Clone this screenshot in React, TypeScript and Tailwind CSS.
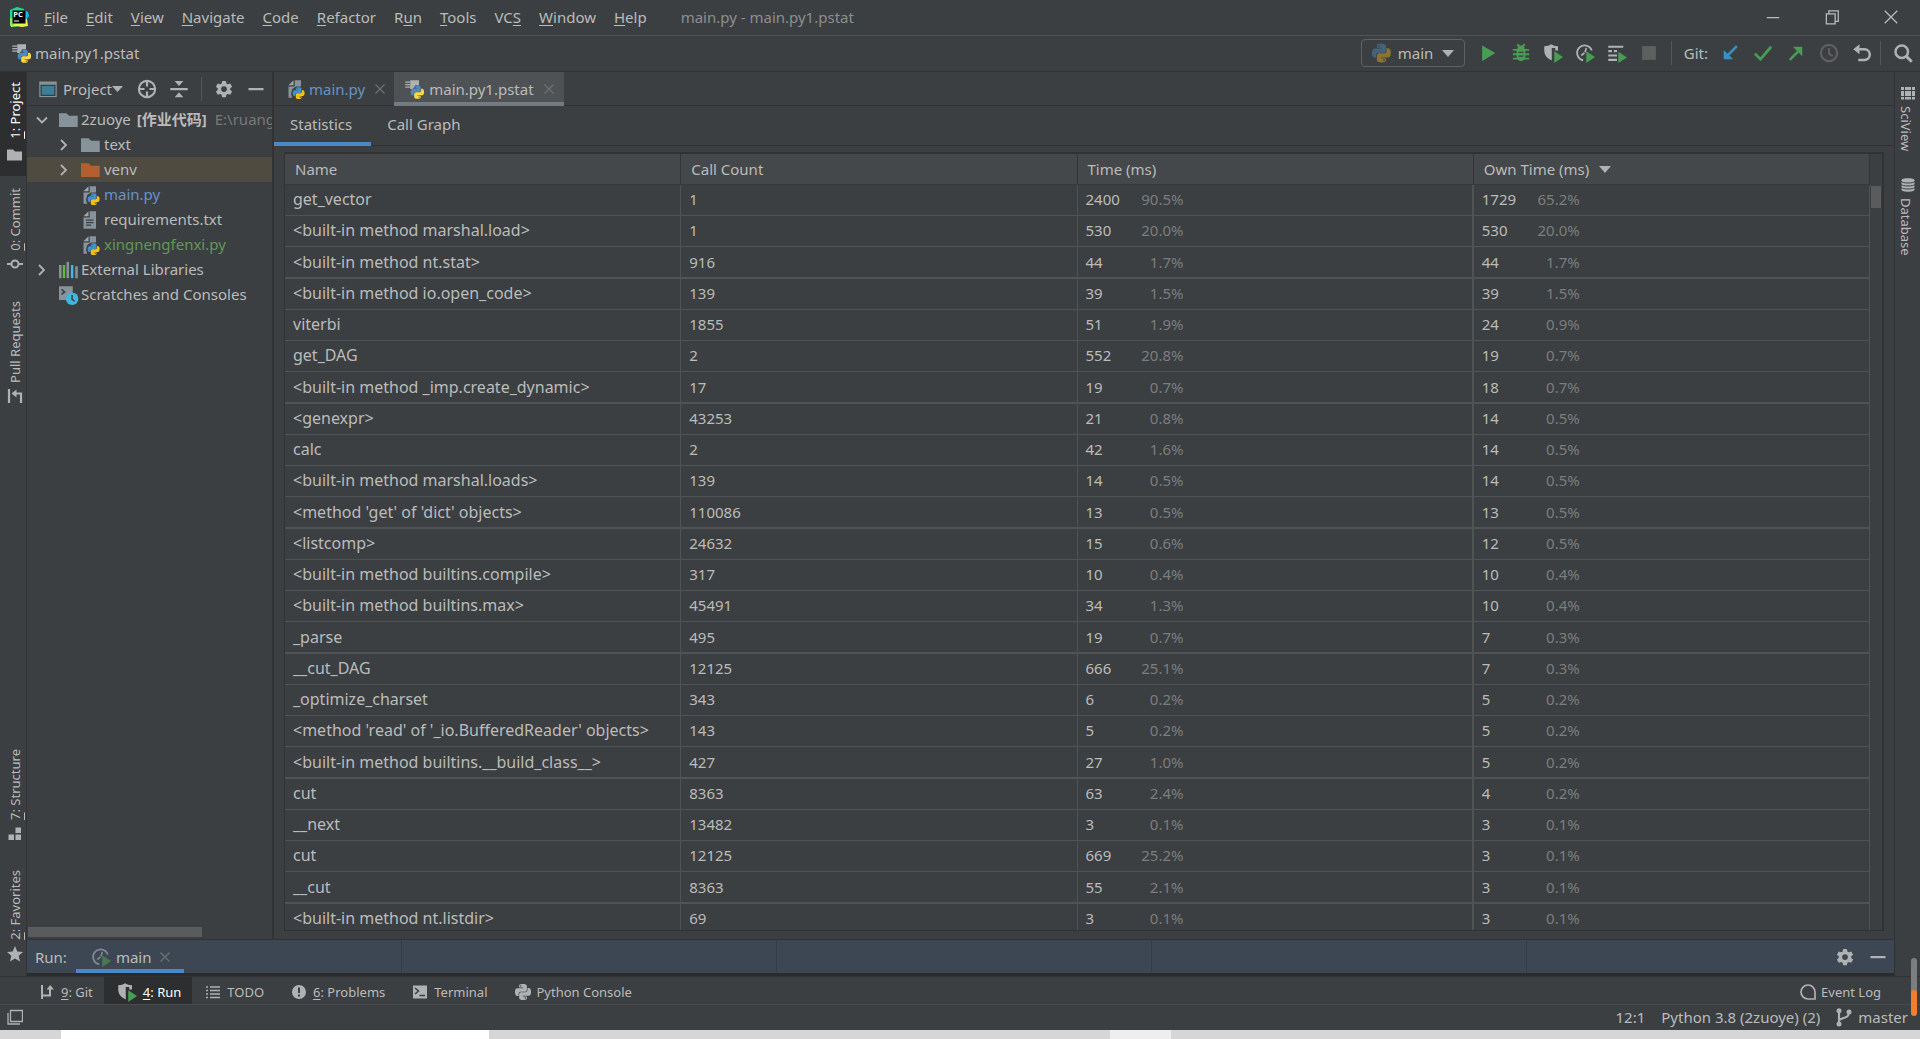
import type { ReactNode } from "react";

const treeFiles = [
  { name: "text", kind: "folder", color: "text-[#bbbbbb]" },
  { name: "venv", kind: "excluded", color: "text-[#bbbbbb]" },
  { name: "main.py", kind: "python", color: "text-[#6494c4]" },
  { name: "requirements.txt", kind: "text", color: "text-[#bbbbbb]" },
  { name: "xingnengfenxi.py", kind: "python", color: "text-[#629755]" },
];

const stats = [
  ["get_vector", "1", "2400", "90.5%", "1729", "65.2%"],
  ["<built-in method marshal.load>", "1", "530", "20.0%", "530", "20.0%"],
  ["<built-in method nt.stat>", "916", "44", "1.7%", "44", "1.7%"],
  ["<built-in method io.open_code>", "139", "39", "1.5%", "39", "1.5%"],
  ["viterbi", "1855", "51", "1.9%", "24", "0.9%"],
  ["get_DAG", "2", "552", "20.8%", "19", "0.7%"],
  ["<built-in method _imp.create_dynamic>", "17", "19", "0.7%", "18", "0.7%"],
  ["<genexpr>", "43253", "21", "0.8%", "14", "0.5%"],
  ["calc", "2", "42", "1.6%", "14", "0.5%"],
  ["<built-in method marshal.loads>", "139", "14", "0.5%", "14", "0.5%"],
  ["<method 'get' of 'dict' objects>", "110086", "13", "0.5%", "13", "0.5%"],
  ["<listcomp>", "24632", "15", "0.6%", "12", "0.5%"],
  ["<built-in method builtins.compile>", "317", "10", "0.4%", "10", "0.4%"],
  ["<built-in method builtins.max>", "45491", "34", "1.3%", "10", "0.4%"],
  ["_parse", "495", "19", "0.7%", "7", "0.3%"],
  ["__cut_DAG", "12125", "666", "25.1%", "7", "0.3%"],
  ["_optimize_charset", "343", "6", "0.2%", "5", "0.2%"],
  ["<method 'read' of '_io.BufferedReader' objects>", "143", "5", "0.2%", "5", "0.2%"],
  ["<built-in method builtins.__build_class__>", "427", "27", "1.0%", "5", "0.2%"],
  ["cut", "8363", "63", "2.4%", "4", "0.2%"],
  ["__next", "13482", "3", "0.1%", "3", "0.1%"],
  ["cut", "12125", "669", "25.2%", "3", "0.1%"],
  ["__cut", "8363", "55", "2.1%", "3", "0.1%"],
  ["<built-in method nt.listdir>", "69", "3", "0.1%", "3", "0.1%"],
];

// [before mnemonic, mnemonic, after mnemonic]
const menus = [
  ["", "F", "ile"],
  ["", "E", "dit"],
  ["", "V", "iew"],
  ["", "N", "avigate"],
  ["", "C", "ode"],
  ["", "R", "efactor"],
  ["R", "u", "n"],
  ["", "T", "ools"],
  ["VC", "S", ""],
  ["", "W", "indow"],
  ["", "H", "elp"],
];

const PY_TOP =
  "M14.25.18l.9.2.73.26.59.3.45.32.34.34.25.34.16.33.1.3.04.26.02.2-.01.13V8.5l-.05.63-.13.55-.21.46-.26.38-.3.31-.33.25-.35.19-.35.14-.33.1-.3.07-.26.04-.21.02H8.77l-.69.05-.59.14-.5.22-.41.27-.33.32-.27.35-.2.36-.15.37-.1.35-.07.32-.04.27-.02.21v3.06H3.17l-.21-.03-.28-.07-.32-.12-.35-.18-.36-.26-.36-.36-.35-.46-.32-.59-.28-.73-.21-.88-.14-1.05-.05-1.23.06-1.22.16-1.04.24-.87.32-.71.36-.57.4-.44.42-.33.42-.24.4-.16.36-.1.32-.05.24-.01h.16l.06.01h8.16v-.83H6.18l-.01-2.75-.02-.37.05-.34.11-.31.17-.28.25-.26.31-.23.38-.2.44-.18.51-.15.58-.12.64-.1.71-.06.77-.04.84-.02 1.27.05zm-6.3 1.98l-.23.33-.08.41.08.41.23.34.33.22.41.09.41-.09.33-.22.23-.34.08-.41-.08-.41-.23-.33-.33-.22-.41-.09-.41.09z";
const PY_BOTTOM =
  "M21.1 6.11l.28.06.32.12.35.18.36.27.36.35.35.47.32.59.28.73.21.88.14 1.04.05 1.23-.06 1.23-.16 1.04-.24.86-.32.71-.36.57-.4.45-.42.33-.42.24-.4.16-.36.09-.32.05-.24.02-.16-.01h-8.22v.82h5.84l.01 2.76.02.36-.05.34-.11.31-.17.29-.25.25-.31.24-.38.2-.44.17-.51.15-.58.13-.64.09-.71.07-.77.04-.84.01-1.27-.04-1.07-.14-.9-.2-.73-.25-.59-.3-.45-.33-.34-.34-.25-.34-.16-.33-.1-.3-.04-.25-.02-.2.01-.13v-5.34l.05-.64.13-.54.21-.46.26-.38.3-.32.33-.24.35-.2.35-.14.33-.1.3-.06.26-.04.21-.02.13-.01h5.84l.69-.05.59-.14.5-.21.41-.28.33-.32.27-.35.2-.36.15-.36.1-.35.07-.32.04-.28.02-.21V6.07h2.09l.14.01zm-6.47 14.25l-.23.33-.08.41.08.41.23.33.33.23.41.08.41-.08.33-.23.23-.33.08-.41-.08-.41-.23-.33-.33-.23-.41-.08-.41.08z";

function Icon({ children, className = "size-5" }: { children: ReactNode; className?: string }) {
  return (
    <svg viewBox="0 0 16 16" fill="none" aria-hidden="true" className={`shrink-0 ${className}`}>
      {children}
    </svg>
  );
}

function PySnake({ x, y, size, top, bottom }: { x: number; y: number; size: number; top: string; bottom: string }) {
  return (
    <g transform={`translate(${x} ${y}) scale(${size / 24})`}>
      <path d={PY_TOP} fill={top} />
      <path d={PY_BOTTOM} fill={bottom} />
    </g>
  );
}

function PyFileIcon() {
  return (
    <Icon>
      <path d="M6 1 2 5h4z" fill="#9aa7b0" />
      <path d="M7 1v5H2v9h3l-1-3 1-4 3-2h4V1z" fill="#87939a" />
      <PySnake x={5.4} y={6.6} size={9.4} top="#3f93cc" bottom="#f5c211" />
    </Icon>
  );
}

function PstatIcon() {
  return (
    <Icon>
      <path d="M5 1h7v4H9L7 8H5z" fill="#afb1b3" />
      <path d="M1 2h4v1H1zM1 4h4v1H1zM1 6h5v1H1z" fill="#afb1b3" />
      <PySnake x={5.4} y={5.2} size={10.6} top="#4b8bc2" bottom="#fbd84b" />
    </Icon>
  );
}

function TextFileIcon() {
  return (
    <Icon>
      <path d="M6 1 2 5h4z" fill="#9aa7b0" />
      <path d="M7 1v5H2v9h10V1z" fill="#87939a" />
      <path d="M4 8h6M4 10h6M4 12h4" stroke="#3c3f41" />
    </Icon>
  );
}

function FolderIcon({ fill, className }: { fill: string; className?: string }) {
  return (
    <Icon className={className}>
      <path d="M0 2.5h6l2 2h7v9H0z" fill={fill} />
    </Icon>
  );
}

function GearIcon() {
  return (
    <Icon>
      <path
        fillRule="evenodd"
        fill="#afb1b3"
        d="M6.5 1.5h3l.4 2 1.2.7 1.9-.7 1.5 2.6-1.500 1.300v1.300l1.500 1.300-1.500 2.600-1.900-.7-1.200.7-.4 2h-3l-.4-2-1.200-.7-1.900.7L1.500 10l1.500-1.300V7.400L1.500 6.100 3 3.500l1.900.7 1.200-.7zM8 5.700a2.300 2.300 0 1 0 0 4.600 2.300 2.300 0 0 0 0-4.600z"
      />
    </Icon>
  );
}

function MinusIcon() {
  return (
    <Icon>
      <path d="M2 7.2h12V9H2z" fill="#afb1b3" />
    </Icon>
  );
}

function CloseIcon() {
  return (
    <svg viewBox="0 0 10 10" aria-hidden="true" className="size-[10px] shrink-0">
      <path d="M.5.5l9 9M9.5.5l-9 9" stroke="#6e7173" strokeWidth="1.2" />
    </svg>
  );
}

function ProfileIcon({ dim = false }: { dim?: boolean }) {
  const gray = dim ? "#7f878f" : "#afb1b3";
  return (
    <Icon>
      <path d="M6.5 13.8A6 6 0 1 1 13.4 6" stroke={gray} strokeWidth="1.5" />
      <path d="M9 4 8 7.5M5 10l2.5-2" stroke={gray} strokeWidth="1.3" />
      <path d="M9 6.5l7 4.7L9 16z" fill={dim ? "#49784f" : "#499c54"} />
    </Icon>
  );
}

function CoverageIcon() {
  return (
    <Icon>
      <path d="M1 2.5Q4.5 2.5 6.500 1q2 1.500 5.500 1.500V6H9.800V4H7v10C3 12 1 9.500 1 6z" fill="#afb1b3" />
      <path d="M9 6.5l7 4.7L9 16z" fill="#499c54" />
    </Icon>
  );
}

function Chevron({ open = false }: { open?: boolean }) {
  return (
    <Icon className="size-4">
      <path
        d={open ? "M3 5.5l5 5 5-5" : "M5 3l5 5-5 5"}
        stroke="#afb1b3"
        strokeWidth="1.8"
      />
    </Icon>
  );
}

function PycharmLogo() {
  return (
    <svg viewBox="0 0 20 20" aria-hidden="true" className="size-5 shrink-0">
      <path d="M1 3 8 0l7 2 1 14-9 4-6-1z" fill="#21d789" />
      <path d="M15 3l4 2 1 4-3 4-3-5z" fill="#07c3f2" />
      <path d="M1 12l6-2 11 2 1 7-6 1-6-1-5 1z" fill="#e8f44c" />
      <path d="M1 11h4v8l-4-1z" fill="#8be85a" />
      <path d="M3.5 3.5h13v13h-13z" fill="#000" />
      <path d="M5 13.5h5v1H5z" fill="#fff" />
      <text x="4.3" y="10" fill="#fff" fontSize="7.5" fontWeight="700" fontFamily="Open Sans, sans-serif">
        PC
      </text>
    </svg>
  );
}

function Separator() {
  return <div className="h-6 w-px bg-[#515658]" />;
}

function TitleBar() {
  return (
    <header className="flex h-9 shrink-0 items-center border-b border-[#515455] pb-px pl-[9px]">
      <PycharmLogo />
      <nav className="ml-[15px] flex gap-[18px]">
        {menus.map(([before, key, after]) => (
          <button key={before + key + after} type="button" className="whitespace-nowrap">
            {before}
            <span className="underline underline-offset-2">{key}</span>
            {after}
          </button>
        ))}
      </nav>
      <h1 className="ml-[34px] text-[#8c8e8f]">main.py - main.py1.pstat</h1>
      <div className="ml-auto flex gap-[39px] pr-[19px]">
        <button type="button" aria-label="Minimize">
          <Icon>
            <path d="M3 8.5h10" stroke="#bbb" />
          </Icon>
        </button>
        <button type="button" aria-label="Restore">
          <Icon>
            <path d="M3.5 5.5h7v8h-7zM5.5 5V3H13v8.5h-2" stroke="#bbb" />
          </Icon>
        </button>
        <button type="button" aria-label="Close">
          <Icon>
            <path d="M3 3l10 10M13 3 3 13" stroke="#bbb" />
          </Icon>
        </button>
      </div>
    </header>
  );
}

function Toolbar() {
  return (
    <div className="flex h-9 shrink-0 items-center border-b border-[#323232] pr-[7px] pb-px pl-[11px]">
      <PstatIcon />
      <span className="ml-1">main.py1.pstat</span>
      <div className="ml-auto flex items-center gap-3">
        <div className="relative flex items-center">
          <span className="pointer-events-none absolute left-[11px]">
            <Icon>
              <PySnake x={0} y={0.5} size={15} top="#44647a" bottom="#8a7432" />
            </Icon>
          </span>
          <select
            aria-label="Run configuration"
            className="h-7 w-[104px] appearance-none rounded border border-[#5e6162] bg-transparent pl-9 leading-5"
          >
            <option>main</option>
          </select>
          <svg viewBox="0 0 12 7" aria-hidden="true" className="pointer-events-none absolute right-[11px] h-[7px] w-3">
            <path d="M0 0h12L6 7z" fill="#afb1b3" />
          </svg>
        </div>
        <button type="button" aria-label="Run" className="ml-[2px]">
          <Icon>
            <path d="M2.5 2 13 8 2.500 14.500z" fill="#499c54" />
          </Icon>
        </button>
        <button type="button" aria-label="Debug">
          <Icon>
            <path d="M4.5 5.5h7V11a3.500 3.500 0 0 1-7 0z" fill="#499c54" />
            <path d="M5 5a3 3 0 0 1 6 0z" fill="#499c54" />
            <path d="M5 1l2 2M11 1 9 3M1.5 5.5h13M1.5 9h13M1.5 12.5h13" stroke="#499c54" strokeWidth="1.5" />
            <path d="M6 7.5h4M6 10.5h4" stroke="#3c3f41" />
          </Icon>
        </button>
        <button type="button" aria-label="Run with coverage">
          <CoverageIcon />
        </button>
        <button type="button" aria-label="Profile">
          <ProfileIcon />
        </button>
        <button type="button" aria-label="Concurrency diagram">
          <Icon>
            <path d="M1 3h12M1 6.5h3M5.5 6.5H8M1 10h7M1 13.5h7" stroke="#afb1b3" strokeWidth="1.7" />
            <path d="M9 7l7 4.5L9 16z" fill="#499c54" />
          </Icon>
        </button>
        <button type="button" aria-label="Stop" disabled>
          <Icon>
            <path d="M2.5 2.5h11v11h-11z" fill="#5e6060" />
          </Icon>
        </button>
        <Separator />
        <span>Git:</span>
        <div className="flex gap-[13px]">
          <button type="button" aria-label="Update project">
            <Icon>
              <path d="M13.5 2.5 5 11" stroke="#3592c4" strokeWidth="2" />
              <path d="M3 5.5V13h7.5z" fill="#3592c4" />
            </Icon>
          </button>
          <button type="button" aria-label="Commit">
            <Icon>
              <path d="M1.5 8.5 6 13l8.500-10" stroke="#499c54" strokeWidth="2.2" />
            </Icon>
          </button>
          <button type="button" aria-label="Push">
            <Icon>
              <path d="M3 13.5 11.5 5" stroke="#499c54" strokeWidth="2" />
              <path d="M5.5 3H13v7.5z" fill="#499c54" />
            </Icon>
          </button>
          <button type="button" aria-label="Show history" disabled>
            <Icon>
              <circle cx="8" cy="8" r="6.5" stroke="#5e6060" strokeWidth="1.8" />
              <path d="M8 4v4.5l3 2" stroke="#5e6060" strokeWidth="1.6" />
            </Icon>
          </button>
          <button type="button" aria-label="Rollback">
            <Icon>
              <path d="M3 5h7a4 4 0 0 1 0 8.5H5" stroke="#afb1b3" strokeWidth="2" />
              <path d="M6 1v8L1 5z" fill="#afb1b3" />
            </Icon>
          </button>
        </div>
        <div className="-ml-1">
          <Separator />
        </div>
        <button type="button" aria-label="Search everywhere">
          <Icon>
            <circle cx="7" cy="7" r="5" stroke="#afb1b3" strokeWidth="2" />
            <path d="M10.5 10.5 15 15" stroke="#afb1b3" strokeWidth="2.4" />
          </Icon>
        </button>
      </div>
    </div>
  );
}

function SideLabel({ mnemonic, children }: { mnemonic?: string; children: ReactNode }) {
  return (
    <span className="rotate-180 whitespace-nowrap [writing-mode:vertical-rl]">
      {mnemonic && <span className="underline underline-offset-2">{mnemonic}</span>}
      {children}
    </span>
  );
}

function LeftStripe() {
  return (
    <aside className="flex w-[27px] shrink-0 flex-col border-r border-[#323232] text-[13px] leading-4">
      <button type="button" className="flex h-[104px] flex-col items-center justify-end gap-2 bg-[#2c2e2f] pb-[13px] pl-[3px] text-white">
        <SideLabel mnemonic="1">: Project</SideLabel>
        <FolderIcon fill="#afb1b3" className="size-4" />
      </button>
      <button type="button" className="flex h-24 flex-col items-center justify-end gap-[5px] pl-[3px]">
        <SideLabel mnemonic="0">: Commit</SideLabel>
        <Icon className="size-4">
          <circle cx="8" cy="8" r="3.5" stroke="#afb1b3" strokeWidth="2" />
          <path d="M0 8h4M12 8h4" stroke="#afb1b3" strokeWidth="2" />
        </Icon>
      </button>
      <button type="button" className="flex h-[132px] flex-col items-center justify-end gap-[5px] pl-[3px]">
        <SideLabel>Pull Requests</SideLabel>
        <Icon className="size-4">
          <path d="M2 1v14M6 5.5h8V15" stroke="#afb1b3" strokeWidth="2.2" />
          <path d="M9.5 1.5v8l-5-4z" fill="#afb1b3" />
        </Icon>
      </button>
      <div className="mt-auto flex flex-col pb-[14px]">
        <button type="button" className="flex flex-col items-center gap-[6px] pl-[3px]">
          <SideLabel mnemonic="7">: Structure</SideLabel>
          <Icon className="size-4">
            <path d="M8.5 1.5H14V7H8.5zM1.5 8.5H7V14H1.5zM8.5 8.5H14V14H8.5z" fill="#afb1b3" />
          </Icon>
        </button>
        <button type="button" className="mt-7 flex flex-col items-center gap-[6px] pl-[3px]">
          <SideLabel mnemonic="2">: Favorites</SideLabel>
          <Icon className="size-4">
            <path d="M8 0l2.3 5.4 5.7.5-4.3 3.8L13 15.5 8 12.4l-5 3.1 1.3-5.8L0 5.900l5.700-.5z" fill="#afb1b3" />
          </Icon>
        </button>
      </div>
    </aside>
  );
}

function RightStripe() {
  return (
    <aside className="flex w-[26px] shrink-0 flex-col items-center gap-[26px] border-l border-[#323232] pt-[13px] text-[13px] leading-4">
      <button type="button" className="flex flex-col items-center gap-[5px]">
        <Icon className="size-4">
          <path d="M1 2h14v3H1zM1 6h14v5H1zM1 12h14v2.5H1z" fill="#afb1b3" />
          <path d="M4.5 1v14M11.5 1v14" stroke="#3c3f41" />
        </Icon>
        <span className="pr-1 [writing-mode:vertical-rl]">SciView</span>
      </button>
      <button type="button" className="flex flex-col items-center gap-[5px]">
        <Icon className="size-4">
          <path d="M1.5 3C1.5.5 14.5.5 14.5 3v9.500c0 3-13 3-13 0z" fill="#afb1b3" />
          <path d="M1 4.5c2 2 12 2 14 0M1 7.5c2 2 12 2 14 0M1 10.5c2 2 12 2 14 0" stroke="#3c3f41" />
        </Icon>
        <span className="pr-1 [writing-mode:vertical-rl]">Database</span>
      </button>
    </aside>
  );
}

function FileIcon({ kind }: { kind: string }) {
  if (kind === "folder") return <FolderIcon fill="#87939a" />;
  if (kind === "excluded") return <FolderIcon fill="#b35f2f" />;
  if (kind === "python") return <PyFileIcon />;
  return <TextFileIcon />;
}

function ProjectPanel() {
  return (
    <section className="flex w-[247px] shrink-0 flex-col overflow-hidden border-r-2 border-[#323232]">
      <div className="flex h-[34px] shrink-0 items-center border-b border-[#323232] pl-[11px]">
        <button type="button" className="flex items-center">
          <Icon>
            <path d="M1 2h14v12.500H1z" fill="#87939a" />
            <path d="M2.5 5h11v8h-11z" fill="#3b7f98" stroke="#3c3f41" />
          </Icon>
          <span className="ml-[5px]">Project</span>
          <svg viewBox="0 0 11 6" aria-hidden="true" className="h-[6px] w-[11px]">
            <path d="M0 0h11L5.5 6z" fill="#afb1b3" />
          </svg>
        </button>
        <div className="ml-auto flex items-center gap-3 pr-[6px]">
          <button type="button" aria-label="Select opened file">
            <Icon>
              <circle cx="8" cy="8" r="6.5" stroke="#afb1b3" strokeWidth="1.7" />
              <path d="M8 2v4M8 10v4M2 8h4M10 8h4" stroke="#afb1b3" strokeWidth="1.7" />
            </Icon>
          </button>
          <button type="button" aria-label="Collapse all">
            <Icon>
              <path d="M1 7.2h14V9H1z" fill="#afb1b3" />
              <path d="M4.5 1.5h7L8 5.5zM4.5 14.5h7L8 10.5z" fill="#afb1b3" />
            </Icon>
          </button>
          <Separator />
          <button type="button" aria-label="Options">
            <GearIcon />
          </button>
          <button type="button" aria-label="Hide">
            <MinusIcon />
          </button>
        </div>
      </div>
      <ul className="pt-px leading-[25px] whitespace-nowrap">
        <li className="flex h-[25px] items-center pl-[7px]">
          <Chevron open />
          <span className="ml-[9px]">
            <FolderIcon fill="#87939a" />
          </span>
          <span className="ml-[2px]">2zuoye</span>
          <b className="ml-[6px]">[作业代码]</b>
          <span className="ml-2 text-[#787878]">E:\ruang</span>
        </li>
        {treeFiles.map(({ name, kind, color }) => (
          <li
            key={name}
            className={`flex h-[25px] items-center gap-[9px] pl-[29px] ${kind === "excluded" ? "bg-[#4f4b41]" : ""}`}
          >
            {kind === "folder" || kind === "excluded" ? <Chevron /> : <span className="w-4" />}
            <span className="flex items-center gap-[3px]">
              <FileIcon kind={kind} />
              <span className={color}>{name}</span>
            </span>
          </li>
        ))}
        <li className="flex h-[25px] items-center pl-[7px]">
          <Chevron />
          <span className="ml-[9px]">
            <Icon>
              <path d="M0 4h2v10.500H0zM13 5h2v9.500h-2z" fill="#87939a" />
              <path d="M3 4h2v10.500H3z" fill="#62b543" />
              <path d="M6 1.5h2v13H6z" fill="#87939a" />
              <path d="M9.5 4h2v10.500h-2z" fill="#40b6e0" />
            </Icon>
          </span>
          <span className="ml-[2px]">External Libraries</span>
        </li>
        <li className="flex h-[25px] items-center pl-8">
          <Icon>
            <path d="M0 1h11v5L7 8l-1 4H0z" fill="#87939a" />
            <path d="M2 3.5l2.5 2L2 7.500" stroke="#3c3f41" strokeWidth="1.3" />
            <circle cx="10.500" cy="11" r="5" fill="#40b6e0" />
            <path d="M10.500 8v3.500l2 1.500" stroke="#3c3f41" strokeWidth="1.2" />
          </Icon>
          <span className="ml-[2px]">Scratches and Consoles</span>
        </li>
      </ul>
      <div className="mt-auto mb-[2px] ml-px h-[10px] w-[174px] bg-[#595b5c]" />
    </section>
  );
}

function TimeCell({ value, percent }: { value: string; percent: string }) {
  return (
    <div className="flex w-[98px] justify-between">
      <span>{value}</span>
      <span className="text-[#7b7d7e]">{percent}</span>
    </div>
  );
}

function StatsTable() {
  const head = "h-[31px] border-b border-r border-b-[#36393b] border-r-[#323537] bg-[#45484a] pl-[10px] font-normal";
  return (
    <div className="mt-[6px] mr-[10px] mb-2 ml-[10px] flex min-h-0 flex-1 overflow-hidden border-t-2 border-r-2 border-b border-l border-[#323232]">
      <table className="w-full flex-1 table-fixed border-separate border-spacing-0 self-start text-left whitespace-nowrap">
        <thead>
          <tr>
            <th className={head}>Name</th>
            <th className={head}>Call Count</th>
            <th className={head}>Time (ms)</th>
            <th className={head}>
              <button type="button" className="flex items-center gap-[10px]">
                Own Time (ms)
                <svg viewBox="0 0 12 7" aria-hidden="true" className="h-[7px] w-3">
                  <path d="M0 0h12L6 7z" fill="#afb1b3" />
                </svg>
              </button>
            </th>
          </tr>
        </thead>
        <tbody>
          {stats.map(([name, calls, time, timePct, own, ownPct], i) => {
            const cell = i % 4 === 2
              ? "h-8 border-b-2 border-[#505354] pb-px pl-2"
              : "h-[31px] border-b border-[#505354] pb-[2px] pl-2";
            return (
              <tr key={i}>
                <td className={`${cell} border-r text-base leading-5`}>{name}</td>
                <td className={`${cell} border-r`}>{calls}</td>
                <td className={`${cell} border-r-2`}>
                  <TimeCell value={time} percent={timePct} />
                </td>
                <td className={`${cell} border-r`}>
                  <TimeCell value={own} percent={ownPct} />
                </td>
              </tr>
            );
          })}
        </tbody>
      </table>
      <div className="w-3 shrink-0 px-px pt-8">
        <div className="h-[22px] bg-[#595b5c]" />
      </div>
    </div>
  );
}

function Editor() {
  return (
    <main className="flex min-w-0 flex-1 flex-col">
      <div className="flex h-[34px] shrink-0 border-b border-[#323232]">
        <button type="button" className="flex items-center pr-[9px] pl-3 text-[#6494c4]">
          <PyFileIcon />
          <span className="mr-[10px] ml-[3px]">main.py</span>
          <CloseIcon />
        </button>
        <button type="button" className="-mb-px flex items-center border-b-4 border-[#747a80] bg-[#4e5254] px-[10px] pt-1">
          <PstatIcon />
          <span className="mr-[10px] ml-[5px]">main.py1.pstat</span>
          <CloseIcon />
        </button>
      </div>
      <div className="flex h-10 shrink-0 border-b border-[#323232]">
        <button type="button" className="-mb-px border-b-4 border-[#4a88c7] pr-[19px] pl-4">
          Statistics
        </button>
        <button type="button" className="px-4 pb-[3px]">
          Call Graph
        </button>
      </div>
      <StatsTable />
    </main>
  );
}

function RunPanel() {
  return (
    <section className="shrink-0 border-t border-[#323232]">
      <div className="flex h-[33px] items-center bg-[repeating-linear-gradient(90deg,#3d4754_0_374px,#363d46_374px_375px)] pr-[6px] pl-2">
        <span>Run:</span>
        <button type="button" className="ml-[9px] flex h-[33px] items-center border-b-4 border-[#4a88c7] pt-1 pr-[14px] pl-[15px]">
          <ProfileIcon dim />
          <span className="mr-[9px] ml-[5px]">main</span>
          <CloseIcon />
        </button>
        <div className="ml-auto flex gap-[13px]">
          <button type="button" aria-label="Options">
            <GearIcon />
          </button>
          <button type="button" aria-label="Hide">
            <MinusIcon />
          </button>
        </div>
      </div>
      <div className="h-[3px] bg-[#2b2b2b]" />
    </section>
  );
}

function ToolButtons() {
  const tab = "flex items-center gap-[6px] pt-[2px] pr-[11px]";
  return (
    <div className="flex h-7 shrink-0 border-b border-[#47494b] pl-[27px] text-[13px] leading-5">
      <button type="button" className={`${tab} pl-3`}>
        <Icon className="size-4">
          <path d="M3 1v14M3 11.5h8V4" stroke="#afb1b3" strokeWidth="2" />
          <path d="M7.5 5.5H15L11.2 1z" fill="#afb1b3" />
        </Icon>
        <span>
          <span className="underline underline-offset-2">9</span>: Git
        </span>
      </button>
      <button type="button" className={`${tab} bg-[#2c2e2f] pl-[13px] text-white`}>
        <CoverageIcon />
        <span>
          <span className="underline underline-offset-2">4</span>: Run
        </span>
      </button>
      <button type="button" className={`${tab} pl-[13px]`}>
        <Icon className="size-4">
          <path d="M1 3h2M5 3h10M1 6.5h2M5 6.5h10M1 10h2M5 10h10M1 13.5h2M5 13.5h10" stroke="#afb1b3" strokeWidth="1.6" />
        </Icon>
        TODO
      </button>
      <button type="button" className={`${tab} pl-4`}>
        <Icon className="size-4">
          <circle cx="8" cy="8" r="7" fill="#afb1b3" />
          <path d="M7 3.5h2V9H7zM7 10.500h2v2H7z" fill="#3c3f41" />
        </Icon>
        <span>
          <span className="underline underline-offset-2">6</span>: Problems
        </span>
      </button>
      <button type="button" className={`${tab} pl-4`}>
        <Icon className="size-4">
          <path d="M1 1.5h14v13H1z" fill="#afb1b3" />
          <path d="M3 4l3.5 3L3 10M7.5 11.5H13" stroke="#3c3f41" strokeWidth="1.5" />
        </Icon>
        Terminal
      </button>
      <button type="button" className={`${tab} pl-4`}>
        <Icon className="size-4">
          <PySnake x={0} y={0} size={16} top="#afb1b3" bottom="#afb1b3" />
        </Icon>
        Python Console
      </button>
      <button type="button" className="ml-auto flex items-center gap-[5px] pt-[2px] pr-[39px]">
        <Icon className="size-4">
          <path d="M15 15V8a7 7 0 1 0-7 7z" stroke="#afb1b3" strokeWidth="1.7" />
        </Icon>
        Event Log
      </button>
    </div>
  );
}

function StatusBar() {
  return (
    <div className="flex h-[25px] shrink-0 items-center pr-3 pb-px pl-[7px]">
      <button type="button" aria-label="Tool windows">
        <Icon className="size-4">
          <path d="M3.5 1.5h12v11h-12zM1 4v11h12" stroke="#afb1b3" strokeWidth="1.3" />
        </Icon>
      </button>
      <span className="ml-auto">12:1</span>
      <span className="ml-4">Python 3.8 (2zuoye) (2)</span>
      <button type="button" className="ml-[14px] flex items-center gap-1">
        <Icon>
          <circle cx="4" cy="3" r="2" fill="#afb1b3" />
          <circle cx="4" cy="13.5" r="2" fill="#afb1b3" />
          <circle cx="12" cy="4" r="2" fill="#afb1b3" />
          <path d="M4 3v10M12 4c0 5-4 4-8 6.500" stroke="#afb1b3" strokeWidth="1.7" />
        </Icon>
        master
      </button>
    </div>
  );
}

export default function App() {
  return (
    <div className="relative flex h-screen flex-col overflow-hidden bg-[#3c3f41] font-['Noto_Sans','Noto_Sans_CJK_SC',sans-serif] text-[15px] leading-5 text-[#bbbbbb]">
      <TitleBar />
      <Toolbar />
      <div className="flex min-h-0 flex-1 border-b border-[#323232]">
        <LeftStripe />
        <div className="flex min-w-0 flex-1 flex-col">
          <div className="flex min-h-0 flex-1">
            <ProjectPanel />
            <Editor />
          </div>
          <RunPanel />
        </div>
        <RightStripe />
      </div>
      <ToolButtons />
      <StatusBar />
      {/* top edge of the desktop taskbar */}
      <footer className="flex h-[9px] shrink-0 overflow-hidden bg-[#d6d6d6]">
        <div className="ml-[61px] w-[428px] bg-white" />
        <div className="ml-[621px] w-[61px] bg-[#eeeeee]" />
      </footer>
      <div className="absolute right-[3px] bottom-[23px] flex h-[58px] w-[6px] flex-col overflow-hidden rounded-full bg-[#7b7d7e]">
        <div className="mt-auto h-[26px] rounded-full bg-[#f57c2a]" />
      </div>
    </div>
  );
}
